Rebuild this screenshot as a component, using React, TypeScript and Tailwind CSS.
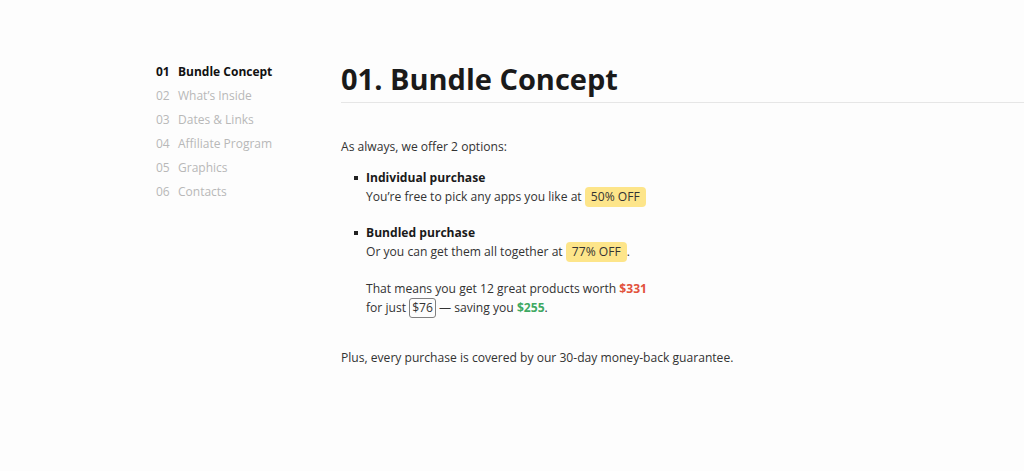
import React from "react";

const nav = [
  ["01", "Bundle Concept"],
  ["02", "What’s Inside"],
  ["03", "Dates & Links"],
  ["04", "Affiliate Program"],
  ["05", "Graphics"],
  ["06", "Contacts"],
];

export default function App() {
  return (
    <div
      className="min-h-[471px] w-full bg-[#fdfdfd] text-[#333] flex overflow-hidden"
      style={{ fontFamily: '"Open Sans", "Noto Sans", sans-serif' }}
    >
      <aside className="w-[185px] shrink-0 ml-[156px] pt-[60px]">
        <ul className="flex flex-col">
          {nav.map(([n, t], i) => (
            <li
              key={n}
              className={`h-[24px] flex items-center text-[12px] ${
                i === 0 ? "font-bold text-[#111]" : "text-[#b8b8b8]"
              }`}
            >
              <span className="w-[22px]">{n}</span>
              <span>{t}</span>
            </li>
          ))}
        </ul>
      </aside>
      <main className="flex-1 pt-[58px]">
        <h1 className="text-[29px] leading-[42px] font-bold text-[#1a1a1a] pb-[2px] border-b border-[#e6e6e6]">
          01. Bundle Concept
        </h1>
        <div className="text-[12.1px] leading-[19px] pt-[34px]">
          <p>As always, we offer 2 options:</p>
          <ul className="mt-[12px] pl-[25px]">
            <li className="relative">
              <span className="absolute left-[-12px] top-[8px] w-[4px] h-[4px] bg-[#222]" />
              <div className="font-bold text-[#1a1a1a]">Individual purchase</div>
              <div>
                You’re free to pick any apps you like at{" "}
                <span className="inline-block bg-[#fde58a] rounded-[4px] px-[6px] leading-[20px]">50% OFF</span>
              </div>
            </li>
            <li className="relative mt-[16px]">
              <span className="absolute left-[-12px] top-[8px] w-[4px] h-[4px] bg-[#222]" />
              <div className="font-bold text-[#1a1a1a]">Bundled purchase</div>
              <div>
                Or you can get them all together at{" "}
                <span className="inline-block bg-[#fde58a] rounded-[4px] px-[6px] leading-[20px]">77% OFF</span>.
              </div>
              <div className="mt-[17px]">
                That means you get 12 great products worth{" "}
                <span className="font-bold text-[#e2533d]">$331</span>
                <br />
                for just{" "}
                <span className="inline-block border border-[#808080] rounded-[3px] px-[2px] leading-[18px]">$76</span>{" "}
                — saving you <span className="font-bold text-[#3fa963]">$255</span>.
              </div>
            </li>
          </ul>
          <p className="mt-[30px]">Plus, every purchase is covered by our 30-day money-back guarantee.</p>
        </div>
      </main>
    </div>
  );
}
